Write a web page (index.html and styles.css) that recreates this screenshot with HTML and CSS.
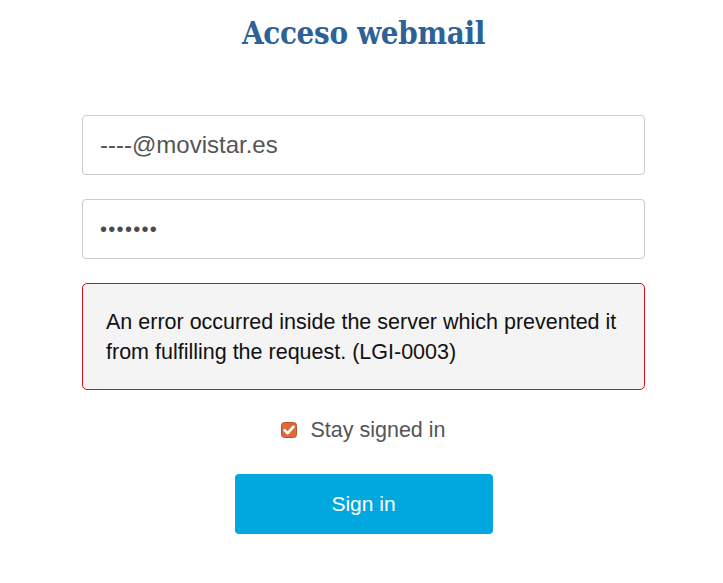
FILE: index.html
```html
<!DOCTYPE html>
<html>
<head>
<meta charset="utf-8">
<link rel="stylesheet" href="styles.css">
</head>
<body>
<div class="login">
  <h1 class="title">Acceso webmail</h1>
  <form class="form">
    <input class="field" type="text" value="----@movistar.es">
    <input class="field pass" type="password" value="1234567">
    <div class="error">An error occurred inside the server which prevented it from fulfilling the request. (LGI-0003)</div>
    <label class="stay"><span class="check"><svg viewBox="0 0 16 16" width="16" height="16"><rect x="0.5" y="0.5" width="15" height="15" rx="3" fill="#dc6a3a" stroke="#b85628"/><path d="M3.6 8.2 L6.7 11.2 L12.4 4.8" fill="none" stroke="#fff" stroke-width="2.6" stroke-linecap="round" stroke-linejoin="round"/></svg></span>Stay signed in</label>
    <div class="actions"><button class="btn" type="button">Sign in</button></div>
  </form>
</div>
</body>
</html>
```
FILE: styles.css
```css
html, body { margin: 0; padding: 0; background: #fff; }
body { font-family: "Liberation Sans", Arial, sans-serif; }
.login { width: 563px; margin-left: 82px; }
.title {
  margin: 0;
  padding-top: 13px;
  height: 115px;
  box-sizing: border-box;
  text-align: center;
  font-family: "DejaVu Serif Condensed", "DejaVu Serif", serif;
  font-stretch: condensed;
  font-weight: bold;
  font-size: 31px;
  line-height: 40px;
  letter-spacing: -0.3px;
  color: #2e6296;
}
.form { display: flex; flex-direction: column; }
.field {
  box-sizing: border-box;
  width: 563px;
  height: 60px;
  margin: 0 0 24px 0;
  padding: 0 17px;
  border: 1px solid #ccc;
  border-radius: 4px;
  font-family: "Liberation Sans", Arial, sans-serif;
  font-size: 24px;
  color: #555;
  outline: none;
}
.pass { font-size: 20px; letter-spacing: 1.3px; color: #4a4a4a; }
.error {
  box-sizing: border-box;
  min-height: 107px;
  padding: 23px 23px 22px;
  border: 1px solid #d0131d;
  border-radius: 5px;
  background: #f4f4f4;
  color: #111;
  font-size: 21.5px;
  line-height: 30px;
}
.stay {
  display: flex;
  justify-content: center;
  align-items: center;
  margin-top: 28px;
  font-size: 21.5px;
  color: #555;
  height: 24px;
}
.check { display: inline-flex; margin-right: 13px; }
.actions { display: flex; justify-content: center; margin-top: 32px; }
.btn {
  width: 258px;
  height: 60px;
  border: none;
  border-radius: 4px;
  background: #00a8df;
  color: #fff;
  font-family: "Liberation Sans", Arial, sans-serif;
  font-size: 21px;
}
```
